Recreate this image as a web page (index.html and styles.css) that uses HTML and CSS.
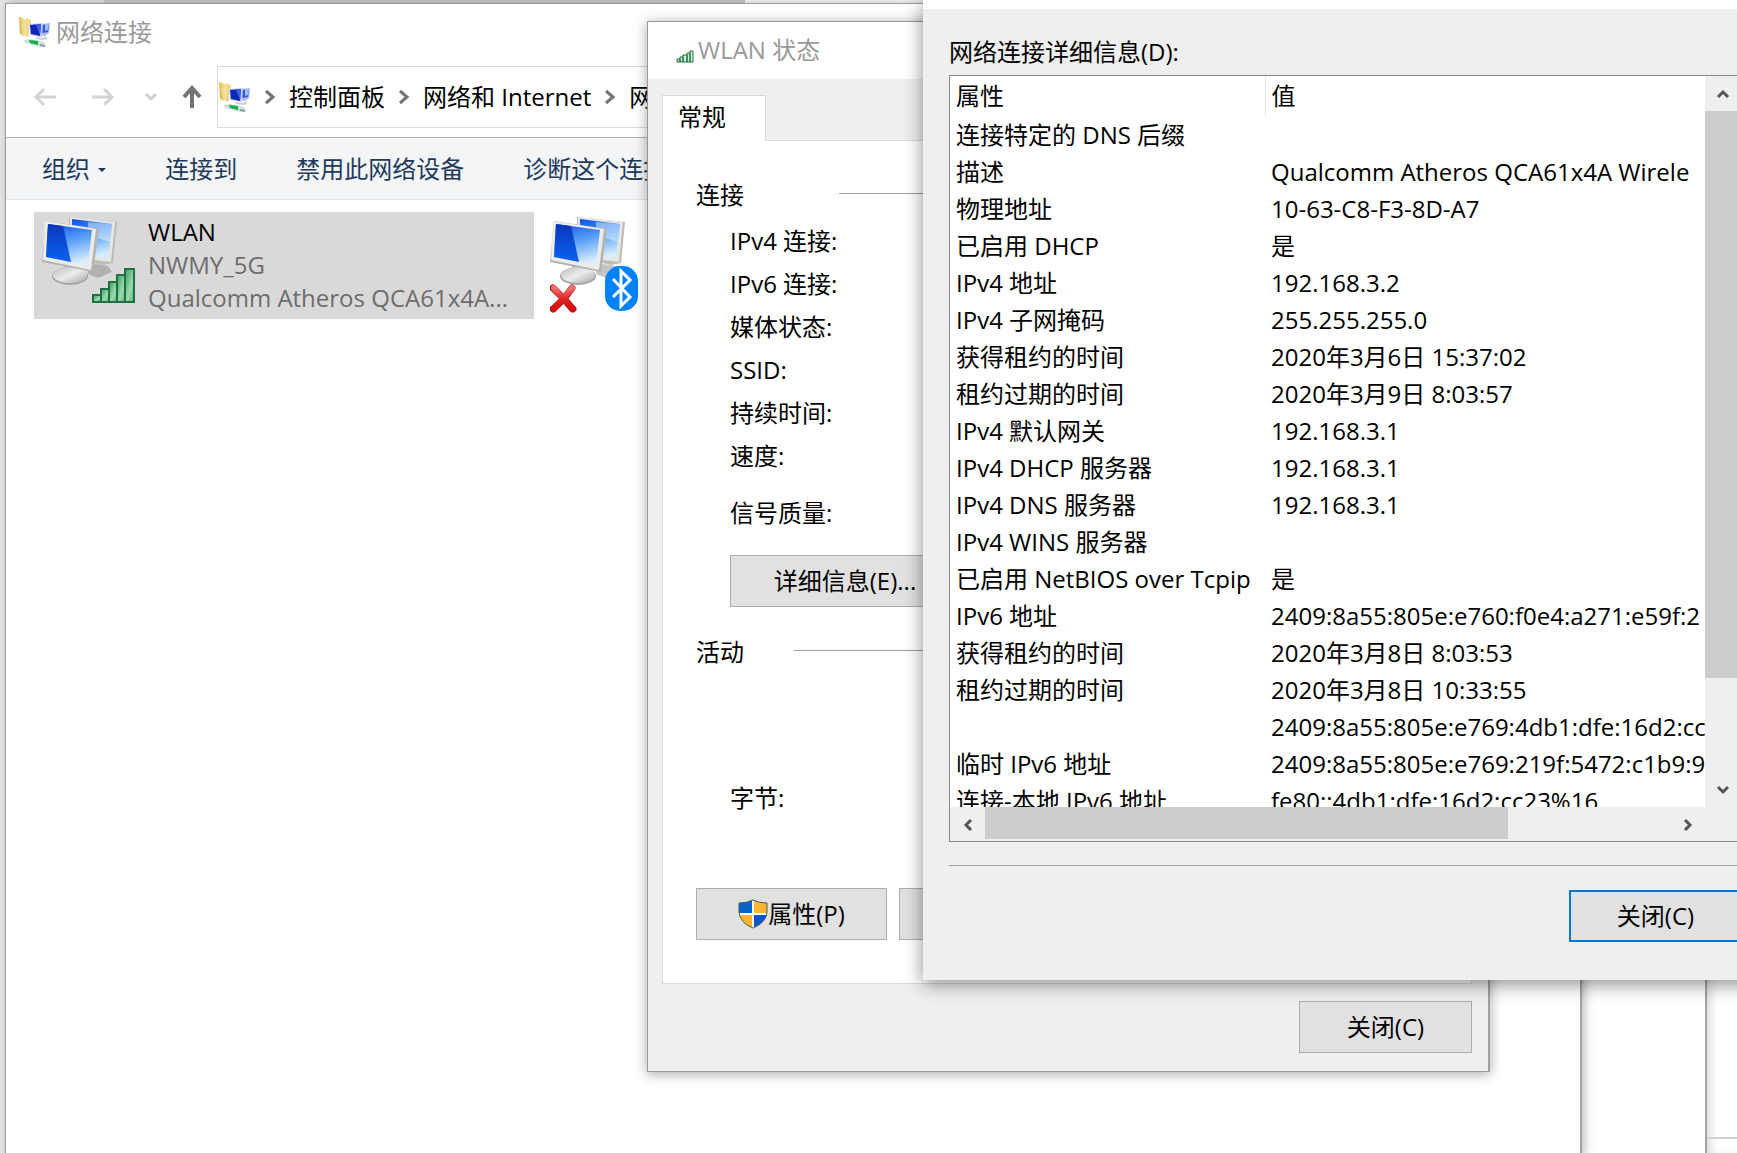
FILE: index.html
```html
<!DOCTYPE html>
<html lang="zh-CN">
<head>
  <meta charset="UTF-8">
  <meta name="viewport" content="width=device-width, initial-scale=1.0">
  <title>网络连接</title>
  <link rel="stylesheet" href="styles.css">
</head>
<body>
  <!-- Shared icon shapes -->
  <svg class="defs" width="0" height="0" aria-hidden="true">
    <defs>
      <linearGradient id="glass" x1="0.2" y1="0" x2="0.5" y2="1">
        <stop offset="0" stop-color="#1257e6"/>
        <stop offset="0.5" stop-color="#5fa4f8"/>
        <stop offset="1" stop-color="#d8edff"/>
      </linearGradient>
      <linearGradient id="deep" x1="0" y1="0" x2="0" y2="1">
        <stop offset="0" stop-color="#0a35b8"/>
        <stop offset="1" stop-color="#0a62f4"/>
      </linearGradient>
      <linearGradient id="bar" x1="0" y1="0" x2="1" y2="1">
        <stop offset="0" stop-color="#3f9a62"/>
        <stop offset="0.6" stop-color="#9ad8ae"/>
        <stop offset="1" stop-color="#5cb57c"/>
      </linearGradient>
      <linearGradient id="folder" x1="0" y1="0" x2="1" y2="0">
        <stop offset="0" stop-color="#e8cb6c"/>
        <stop offset="1" stop-color="#f8e8ad"/>
      </linearGradient>
      <linearGradient id="stand" x1="0" y1="0" x2="1" y2="1">
        <stop offset="0" stop-color="#bcbcbc"/>
        <stop offset="0.5" stop-color="#ececec"/>
        <stop offset="1" stop-color="#a8a8a8"/>
      </linearGradient>
      <linearGradient id="cross" x1="0" y1="0" x2="0" y2="1">
        <stop offset="0" stop-color="#ee7070"/>
        <stop offset="0.5" stop-color="#e02626"/>
        <stop offset="1" stop-color="#d40c0c"/>
      </linearGradient>
      <symbol id="net-folder" viewBox="0 0 32 32">
        <path d="M0 1l3 1 1 17-3-1z" fill="#d9b74f"/>
        <path d="M1 1l7 3v15l-5 1z" fill="url(#folder)"/>
        <path d="M7 2l5 2v6l-2 1v9l-3 1z" fill="#efd98b"/>
        <path d="M22 8l9-1-1 10-4 3-4-1z" fill="#a9b8ee"/>
        <path d="M23 9l7-1-1 8-6 1z" fill="#3458d8"/>
        <path d="M26 8l4 0-1 6-3 1z" fill="#9dbcf8"/>
        <path d="M10 8l14-1-1 14-12-2z" fill="#c7cef0"/>
        <path d="M11 9l11-1-1 12-9-2z" fill="#1026b8"/>
        <path d="M17 9l5-1-1 11z" fill="#3b64e4"/>
        <path d="M17 21l7 1 3-2 1 3-4 1-7-1z" fill="#c8cfe0"/>
        <path d="M5 24l6-1 14 3 2 4-6 1-15-4z" fill="#cfe0d8"/>
        <path d="M10 24l9 1 0 4-8-2z" fill="#13ad4b"/>
        <path d="M21 28l5 1v2l-5-1z" fill="#8a9cb8"/>
      </symbol>
      <symbol id="monitors" viewBox="0 0 76 72">
        <path d="M48 48l18 3 4 6-14 6-10-4z" fill="#8a8a8a" opacity="0.5"/>
        <path d="M27 2l48 5-4 41-10 2-34-8z" fill="#bcbcb8"/>
        <path d="M28 2l45 5-4 40-41-5z" fill="#e6e6e2"/>
        <path d="M30 4l40 5-4 34-36-4z" fill="url(#glass)"/>
        <path d="M46 7l24 2-2 18-22-7z" fill="#e2f1ff" opacity="0.5"/>
        <path d="M22 48l17 4 3 10H22z" fill="#b4b4b4"/>
        <ellipse cx="28" cy="61" rx="18" ry="9" fill="#a4a4a4"/>
        <ellipse cx="28" cy="60" rx="17" ry="8" fill="url(#stand)"/>
        <path d="M4 6l53 8-6 43L0 47z" fill="#b4b4b0"/>
        <path d="M3 6l51 8-5 41L1 45z" fill="#ececea"/>
        <path d="M6 9l44 6-4 35L4 42z" fill="url(#glass)"/>
        <path d="M6 9l15 2 8 36L4 42z" fill="url(#deep)"/>
      </symbol>
      <symbol id="chevron" viewBox="0 0 12 16">
        <path d="M2 2l7 6-7 6" fill="none" stroke="#737373" stroke-width="3"/>
      </symbol>
    </defs>
  </svg>

  <main class="desktop">
    <div class="strip"></div>
    <div class="back-window">
      <div class="back-pane"></div>
    </div>

    <!-- Network connections folder -->
    <section class="window explorer">
      <header class="explorer-title">
        <svg class="folder-icon"><use href="#net-folder"/></svg>
        <span>网络连接</span>
      </header>

      <nav class="nav-row">
        <button class="nav-button back" aria-label="后退" disabled>
          <svg width="24" height="20" viewBox="0 0 24 20"><path d="M23 10H3M11 2l-8 8 8 8" fill="none" stroke="#d4d4d4" stroke-width="3"/></svg>
        </button>
        <button class="nav-button forward" aria-label="前进" disabled>
          <svg width="24" height="20" viewBox="0 0 24 20"><path d="M1 10h20M13 2l8 8-8 8" fill="none" stroke="#d4d4d4" stroke-width="3"/></svg>
        </button>
        <button class="nav-button recent" aria-label="最近的位置">
          <svg width="14" height="10" viewBox="0 0 14 10"><path d="M2 2l5 5 5-5" fill="none" stroke="#d0d0d0" stroke-width="3"/></svg>
        </button>
        <button class="nav-button up" aria-label="上移">
          <svg width="20" height="24" viewBox="0 0 20 24"><path d="M10 23V4M2 12l8-9 8 9" fill="none" stroke="#737373" stroke-width="4"/></svg>
        </button>
        <div class="address">
          <svg class="folder-icon"><use href="#net-folder"/></svg>
          <svg class="chevron"><use href="#chevron"/></svg>
          <a href="#">控制面板</a>
          <svg class="chevron"><use href="#chevron"/></svg>
          <a href="#">网络和 Internet</a>
          <svg class="chevron"><use href="#chevron"/></svg>
          <a href="#">网络连接</a>
        </div>
      </nav>

      <div class="toolbar">
        <button class="tool">组织 <span class="caret"></span></button>
        <button class="tool">连接到</button>
        <button class="tool">禁用此网络设备</button>
        <button class="tool">诊断这个连接</button>
      </div>

      <div class="items">
        <button class="item selected">
          <svg class="item-icon" viewBox="0 0 96 100">
            <use href="#monitors" x="0" y="0" width="76" height="72"/>
            <g fill="url(#bar)" stroke="#1d7040" stroke-width="2">
              <path d="M51 80h8v7h-8z"/>
              <path d="M59 74h8v13h-8z"/>
              <path d="M67 67h8v20h-8z"/>
              <path d="M75 60h8v27h-8z"/>
              <path d="M83 54h9v33h-9z"/>
            </g>
          </svg>
          <span class="item-text">
            <span class="item-name">WLAN</span>
            <span>NWMY_5G</span>
            <span>Qualcomm Atheros QCA61x4A...</span>
          </span>
        </button>
        <button class="item" aria-label="蓝牙网络连接">
          <svg class="item-icon" viewBox="0 0 96 100">
            <use href="#monitors" x="0" y="0" width="76" height="72"/>
            <path d="M3 73l11 11 8-11M3 94l11-10 9 10" fill="none" stroke="#b01818" stroke-width="7" stroke-linecap="round"/>
            <path d="M4 73l18 21M22 73L4 94" fill="none" stroke="url(#cross)" stroke-width="6" stroke-linecap="round"/>
            <rect x="55" y="51" width="33" height="45" rx="15" fill="#0082fc"/>
            <path d="M63 64l17 18-9 9V56l9 9-17 17" fill="none" stroke="#fff" stroke-width="3"/>
          </svg>
        </button>
      </div>
    </section>

    <!-- WLAN status dialog -->
    <section class="window status">
      <header class="status-title">
        <svg width="18" height="13" viewBox="0 0 18 13">
          <path d="M1 9h3v3H1zM4 7h3v5H4zM7 5h4v7H7zM11 3h3v9h-3zM14 1h3v11h-3z" fill="#d3f5dd" stroke="#1d6b3c" stroke-width="1"/>
        </svg>
        <span>WLAN 状态</span>
      </header>
      <div class="status-body">
        <button class="tab">常规</button>
        <div class="panel">
          <h2 class="group wide">连接</h2>
          <dl class="facts">
            <dt>IPv4 连接:</dt>
            <dt>IPv6 连接:</dt>
            <dt>媒体状态:</dt>
            <dt>SSID:</dt>
            <dt>持续时间:</dt>
            <dt>速度:</dt>
            <dt class="signal">信号质量:</dt>
          </dl>
          <button class="push details-button">详细信息(E)...</button>
          <h2 class="group">活动</h2>
          <p class="bytes">字节:</p>
          <div class="panel-buttons">
            <button class="push">
              <svg width="30" height="30" viewBox="0 0 30 30">
                <path d="M1 4q8 0 14-3v14H1z" fill="#0a63cb"/>
                <path d="M15 1q6 3 14 3v11H15z" fill="#ffb52e"/>
                <path d="M1 15h14v14Q3 24 1 15z" fill="#ffb52e"/>
                <path d="M15 15h14q-2 9-14 14z" fill="#0a57c4"/>
                <path d="M15 1v28M1 15h28" stroke="#fff" stroke-width="2"/>
                <path d="M1 4q8 0 14-3 6 3 14 3v9q-1 11-14 16Q2 24 1 13z" fill="none" stroke="#4c5968" stroke-width="1"/>
              </svg>
              <span>属性(P)</span>
            </button>
            <button class="push" aria-label="禁用"></button>
          </div>
        </div>
        <div class="status-footer">
          <button class="push">关闭(C)</button>
        </div>
      </div>
    </section>

    <!-- Connection details dialog -->
    <section class="window details">
      <div class="details-title"></div>
      <div class="details-body">
        <h2 class="details-label" id="details-label">网络连接详细信息(D):</h2>
        <div class="list">
          <div class="list-view">
            <table class="rows" aria-labelledby="details-label">
              <thead>
                <tr><th class="property">属性</th><th>值</th></tr>
              </thead>
              <tbody>
                <tr><td>连接特定的 DNS 后缀</td><td></td></tr>
                <tr><td>描述</td><td>Qualcomm Atheros QCA61x4A Wirele</td></tr>
                <tr><td>物理地址</td><td>10-63-C8-F3-8D-A7</td></tr>
                <tr><td>已启用 DHCP</td><td>是</td></tr>
                <tr><td>IPv4 地址</td><td>192.168.3.2</td></tr>
                <tr><td>IPv4 子网掩码</td><td>255.255.255.0</td></tr>
                <tr><td>获得租约的时间</td><td>2020年3月6日 15:37:02</td></tr>
                <tr><td>租约过期的时间</td><td>2020年3月9日 8:03:57</td></tr>
                <tr><td>IPv4 默认网关</td><td>192.168.3.1</td></tr>
                <tr><td>IPv4 DHCP 服务器</td><td>192.168.3.1</td></tr>
                <tr><td>IPv4 DNS 服务器</td><td>192.168.3.1</td></tr>
                <tr><td>IPv4 WINS 服务器</td><td></td></tr>
                <tr><td>已启用 NetBIOS over Tcpip</td><td>是</td></tr>
                <tr><td>IPv6 地址</td><td>2409:8a55:805e:e760:f0e4:a271:e59f:2</td></tr>
                <tr><td>获得租约的时间</td><td>2020年3月8日 8:03:53</td></tr>
                <tr><td>租约过期的时间</td><td>2020年3月8日 10:33:55</td></tr>
                <tr><td></td><td>2409:8a55:805e:e769:4db1:dfe:16d2:cc</td></tr>
                <tr><td>临时 IPv6 地址</td><td>2409:8a55:805e:e769:219f:5472:c1b9:9</td></tr>
                <tr><td>连接-本地 IPv6 地址</td><td>fe80::4db1:dfe:16d2:cc23%16</td></tr>
              </tbody>
            </table>
          </div>
          <div class="scroll-y">
            <button class="scroll-button" aria-label="向上滚动">
              <svg width="14" height="10" viewBox="0 0 14 10"><path d="M2 8l5-5 5 5" fill="none" stroke="#555" stroke-width="3"/></svg>
            </button>
            <div class="thumb"></div>
            <button class="scroll-button" aria-label="向下滚动">
              <svg width="14" height="10" viewBox="0 0 14 10"><path d="M2 2l5 5 5-5" fill="none" stroke="#555" stroke-width="3"/></svg>
            </button>
          </div>
          <div class="scroll-x">
            <button class="scroll-button" aria-label="向左滚动">
              <svg width="10" height="14" viewBox="0 0 10 14"><path d="M8 2L3 7l5 5" fill="none" stroke="#555" stroke-width="3"/></svg>
            </button>
            <div class="thumb"></div>
            <button class="scroll-button" aria-label="向右滚动">
              <svg width="10" height="14" viewBox="0 0 10 14"><path d="M2 2l5 5-5 5" fill="none" stroke="#555" stroke-width="3"/></svg>
            </button>
          </div>
        </div>
        <div class="details-footer">
          <button class="push default">关闭(C)</button>
        </div>
      </div>
    </section>
  </main>
</body>
</html>
```
FILE: styles.css
```css
* {
  box-sizing: border-box;
}

body {
  margin: 0;
  overflow: hidden;
  background: #fff;
  color: #000;
  font-family: "Open Sans", "Noto Sans CJK SC", sans-serif;
  font-size: 24px;
  line-height: 36px;
}

button {
  padding: 0;
  border: 0;
  background: none;
  color: inherit;
  font: inherit;
  text-align: left;
  white-space: nowrap;
}

a {
  color: inherit;
  text-decoration: none;
}

h2,
p,
dl {
  margin: 0;
  font-size: 24px;
  font-weight: normal;
}

svg {
  display: block;
  flex: none;
}

.defs {
  position: absolute;
}

.desktop {
  position: relative;
  height: 100vh;
  overflow: hidden;
  background: linear-gradient(to right, #ebebeb 104px, #fff 104px);
}

/* Slivers of the windows behind */
.strip {
  width: 745px;
  height: 4px;
  border-left: 104px solid #e8e8e8;
  background: #d0d0d0;
}

.back-window {
  position: absolute;
  top: 0;
  right: 0;
  bottom: 0;
  width: 32px;
  padding-bottom: 14px;
  border-left: 2px solid #a3a3a3;
  box-shadow: inset 8px 0 8px -4px #ddd;
}

.back-pane {
  height: 100%;
  border-bottom: 2px solid #d0d0d0;
}

.window {
  position: absolute;
  background: #fff;
}

/* Network connections folder */
.explorer {
  top: 3px;
  left: 5px;
  right: 155px;
  bottom: -4px;
  border: 1px solid #9b9b9b;
  border-right: 2px solid #a3a3a3;
  box-shadow: 2px 0 10px rgba(0, 0, 0, 0.3);
}

.explorer-title {
  display: flex;
  align-items: center;
  gap: 5px;
  height: 56px;
  padding-left: 13px;
  color: #999;
}

.folder-icon {
  width: 32px;
  height: 32px;
}

.nav-row {
  display: flex;
  align-items: center;
  height: 77px;
  padding: 0 0 4px 27px;
}

.nav-button {
  flex: none;
}

.forward {
  margin-left: 34px;
}

.recent {
  margin-left: 29px;
}

.up {
  margin-left: 24px;
}

.address {
  display: flex;
  flex: 1;
  align-items: center;
  gap: 13px;
  height: 62px;
  margin-left: 15px;
  padding-left: 1px;
  border: 1px solid #d9d9d9;
  white-space: nowrap;
}

.chevron {
  width: 12px;
  height: 16px;
}

.toolbar {
  display: flex;
  align-items: center;
  gap: 59px;
  height: 63px;
  padding-left: 36px;
  border-top: 1px solid #b0b0b0;
  border-bottom: 1px solid #e4e7ea;
  background: #f4f5f7;
  color: #1e395b;
}

.caret {
  display: inline-block;
  margin: 0 0 6px 2px;
  border: 4px solid transparent;
  border-top-color: #1e395b;
  border-bottom: 0;
}

.items {
  display: flex;
  gap: 8px;
  padding: 12px 28px;
}

.item {
  display: flex;
  gap: 10px;
  height: 107px;
  padding: 3px 8px;
}

.item-icon {
  width: 96px;
  height: 100px;
}

.selected {
  width: 500px;
  background: #d9d9d9;
}

.item-text {
  display: flex;
  flex-direction: column;
  color: #6d6d6d;
  line-height: 33px;
}

.item-name {
  color: #000;
}

/* WLAN status dialog */
.status {
  top: 21px;
  left: 647px;
  width: 843px;
  border: 1px solid #999;
  border-right: 2px solid #a0a0a0;
  box-shadow: 0 2px 12px rgba(0, 0, 0, 0.35);
}

.status-title {
  display: flex;
  align-items: center;
  gap: 4px;
  height: 57px;
  padding: 0 0 2px 28px;
  color: #999;
}

.status-title svg {
  margin-top: 14px;
}

.status-body {
  padding: 16px 16px 18px 14px;
  background: #efefef;
}

.tab {
  position: relative;
  display: block;
  width: 104px;
  height: 46px;
  margin-bottom: -1px;
  padding: 0 0 3px 15px;
  border: 1px solid #d9d9d9;
  border-bottom: 0;
  background: #fff;
}

.panel {
  height: 844px;
  padding: 36px 33px;
  border: 1px solid #d9d9d9;
  background: #fff;
}

.group {
  display: flex;
  align-items: center;
  gap: 50px;
}

.group::after {
  content: "";
  flex: 1;
  height: 1px;
  margin-bottom: 4px;
  background: #a0a0a0;
}

.wide {
  gap: 95px;
}

.facts {
  padding: 6px 34px 21px;
  line-height: 43px;
}

.signal {
  padding-top: 14px;
}

.push {
  display: flex;
  align-items: center;
  justify-content: center;
  width: 173px;
  height: 52px;
  border: 1px solid #adadad;
  background: #e1e1e1;
}

.details-button {
  width: 230px;
  margin: 0 0 27px 34px;
}

.bytes {
  padding: 110px 34px 72px;
}

.panel-buttons {
  display: flex;
  gap: 12px;
}

.panel-buttons .push {
  width: 191px;
}

.status-footer {
  display: flex;
  justify-content: flex-end;
  padding-top: 17px;
}

/* Connection details dialog */
.details {
  top: 0;
  left: 923px;
  right: -31px;
  background: #efefef;
  box-shadow: 0 4px 18px rgba(0, 0, 0, 0.45);
}

.details-title {
  height: 9px;
  background: #fff;
}

.details-body {
  padding: 25px 26px 38px;
}

.list {
  display: grid;
  grid-template-columns: 1fr 36px;
  grid-template-rows: 731px 32px;
  margin-top: 5px;
  padding-bottom: 2px;
  border: 1px solid #828790;
}

.list-view {
  overflow: hidden;
  background: #fff;
}

.rows {
  width: 100%;
  border-collapse: collapse;
  table-layout: fixed;
}

.rows th {
  height: 40px;
  padding: 0 6px;
  font-weight: normal;
  text-align: left;
}

.rows .property {
  width: 315px;
  border-right: 1px solid #e5e5e5;
}

.rows td {
  height: 37px;
  padding: 0 6px;
  white-space: nowrap;
}

.scroll-y {
  display: flex;
  flex-direction: column;
  background: #efefef;
}

.scroll-x {
  display: flex;
}

.scroll-button {
  display: flex;
  flex: none;
  align-items: center;
  justify-content: center;
  width: 35px;
  height: 35px;
}

.thumb {
  background: #cdcdcd;
}

.scroll-y .thumb {
  height: 567px;
  margin-bottom: 94px;
}

.scroll-x .thumb {
  width: 523px;
  margin-right: auto;
}

.details-footer {
  display: flex;
  justify-content: flex-end;
  margin-top: 23px;
  padding-top: 24px;
  border-top: 1px solid #a0a0a0;
}

.default {
  border: 2px solid #0078d7;
}
```
